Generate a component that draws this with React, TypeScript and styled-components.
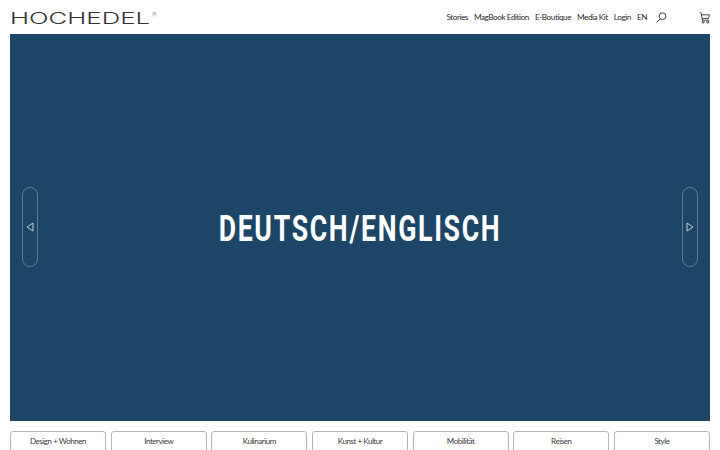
import styled, { createGlobalStyle } from "styled-components";

const Global = createGlobalStyle`
  html, body {
    margin: 0;
    padding: 0;
    height: 100%;
    overflow: hidden;
    background: #fff;
    font-family: "Lato", "Noto Sans", sans-serif;
    color: #333;
  }
`;

const Page = styled.div`
  width: 720px;
  height: 450px;
  padding: 0 10px;
  box-sizing: border-box;
  overflow: hidden;
`;

const Header = styled.header`
  height: 34px;
  display: flex;
  align-items: center;
  justify-content: space-between;
`;

const Logo = styled.svg`
  width: 150px;
  height: 20px;
  margin-top: 3px;
  display: block;

  text {
    font-family: "Inter", sans-serif;
    font-weight: 300;
    font-size: 15.2px;
    fill: #333;
  }

  text.mark {
    font-size: 7px;
    font-weight: 300;
    fill: #999;
  }
`;

const Nav = styled.nav`
  display: flex;
  align-items: center;
`;

const NavLink = styled.a`
  font-size: 8.2px;
  letter-spacing: -0.45px;
  line-height: 12px;
  color: #2b2b2b;
  margin-right: 6px;
  white-space: nowrap;
`;

const SearchButton = styled.span`
  display: flex;
  margin-left: 3px;
  margin-right: 32px;
`;

const Cart = styled.span`
  display: flex;
  margin-top: 1px;
`;

const Hero = styled.section`
  height: 387px;
  background: #1c4567;
  display: flex;
  align-items: center;
  justify-content: space-between;
  padding: 0 12px;
`;

const Arrow = styled.button`
  width: 16px;
  height: 80px;
  padding: 0;
  margin-top: -1px;
  background: transparent;
  border: 1px solid rgba(255, 255, 255, 0.3);
  border-radius: 8px;
  display: flex;
  align-items: center;
  justify-content: center;
`;

const Title = styled.h1`
  margin: 2px 0 0;
  color: #fff;
  font-family: "Roboto", sans-serif;
  font-weight: 700;
  font-size: 36px;
  letter-spacing: 2.3px;
  white-space: nowrap;
  transform: scaleX(0.74);
`;

const Tabs = styled.div`
  margin-top: 10px;
  display: grid;
  grid-template-columns: repeat(7, 1fr);
  gap: 4.5px;
`;

const Tab = styled.a`
  height: 30px;
  box-sizing: border-box;
  border: 1px solid #b5b5b5;
  border-radius: 3px;
  font-size: 8px;
  letter-spacing: -0.45px;
  line-height: 18px;
  text-align: center;
  color: #3a3a3a;
`;

const navItems = ["Stories", "MagBook Edition", "E-Boutique", "Media Kit", "Login", "EN"];
const categories = ["Design + Wohnen", "Interview", "Kulinarium", "Kunst + Kultur", "Mobilität", "Reisen", "Style"];

function App() {
  return (
    <Page>
      <Global />
      <Header>
        <Logo viewBox="0 0 150 20">
          <text x="0" y="15" textLength="140" lengthAdjust="spacingAndGlyphs">HOCHEDEL</text>
          <text className="mark" x="142" y="9">®</text>
        </Logo>
        <Nav>
          {navItems.map(item => (
            <NavLink key={item}>{item}</NavLink>
          ))}
          <SearchButton>
            <svg width="11" height="11" viewBox="0 0 11 11" fill="none" stroke="#333" strokeWidth="0.9">
              <circle cx="6.6" cy="4.2" r="3.4" />
              <path d="M4.2 6.7 L0.8 10.3" />
            </svg>
          </SearchButton>
          <Cart>
            <svg width="11" height="12" viewBox="0 0 11 12" fill="none" stroke="#333" strokeWidth="0.9">
              <path d="M0.6 0.6 L2.2 1 L3.4 8.2 H10" />
              <path d="M2.5 2.8 H10.4 L9.6 6.4 H3" />
              <circle cx="4.2" cy="10" r="1.1" />
              <circle cx="8.8" cy="10" r="1.1" />
            </svg>
          </Cart>
        </Nav>
      </Header>
      <Hero>
        <Arrow aria-label="Zurück">
          <svg width="8" height="10" viewBox="0 0 8 10" fill="none" stroke="rgba(255,255,255,0.7)" strokeWidth="1">
            <path d="M7 1 V9 L1 5 Z" />
          </svg>
        </Arrow>
        <Title>DEUTSCH/ENGLISCH</Title>
        <Arrow aria-label="Weiter">
          <svg width="8" height="10" viewBox="0 0 8 10" fill="none" stroke="rgba(255,255,255,0.7)" strokeWidth="1">
            <path d="M1 1 V9 L7 5 Z" />
          </svg>
        </Arrow>
      </Hero>
      <Tabs>
        {categories.map(name => (
          <Tab key={name}>{name}</Tab>
        ))}
      </Tabs>
    </Page>
  );
}

export default App;
